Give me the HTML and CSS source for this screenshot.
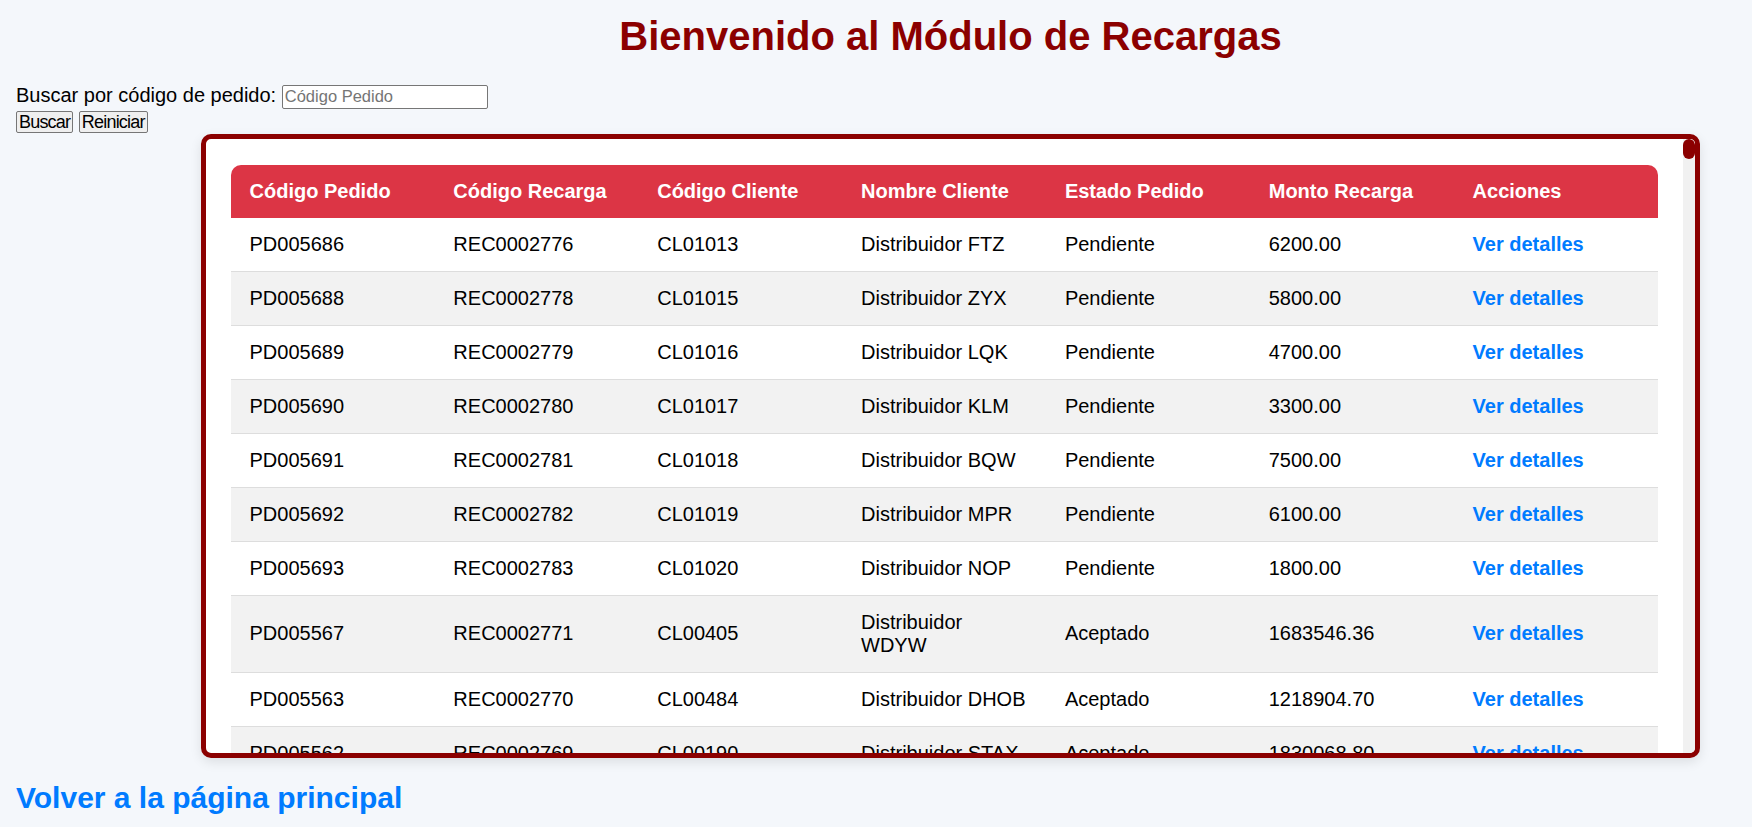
FILE: index.html
```html
<!DOCTYPE html>
<html lang="es">
<head>
<meta charset="utf-8">
<title>Módulo de Recargas</title>
<link rel="stylesheet" href="styles.css">
</head>
<body>
<h1 class="title">Bienvenido al Módulo de Recargas</h1>
<form class="search" onsubmit="return false;">
  <div class="search-row">
    <label class="search-label" for="codigo">Buscar por código de pedido:</label>
    <input class="search-input" id="codigo" type="text" placeholder="Código Pedido">
  </div>
  <div class="search-actions">
    <button class="btn" type="submit">Buscar</button>
    <button class="btn" type="button">Reiniciar</button>
  </div>
</form>
<div class="table-wrap">
  <div class="table-scroll">
    <table class="orders">
      <thead>
        <tr>
          <th>Código Pedido</th>
          <th>Código Recarga</th>
          <th>Código Cliente</th>
          <th>Nombre Cliente</th>
          <th>Estado Pedido</th>
          <th>Monto Recarga</th>
          <th>Acciones</th>
        </tr>
      </thead>
      <tbody>
        <tr><td>PD005686</td><td>REC0002776</td><td>CL01013</td><td>Distribuidor FTZ</td><td>Pendiente</td><td>6200.00</td><td><a class="details" href="#">Ver detalles</a></td></tr>
        <tr><td>PD005688</td><td>REC0002778</td><td>CL01015</td><td>Distribuidor ZYX</td><td>Pendiente</td><td>5800.00</td><td><a class="details" href="#">Ver detalles</a></td></tr>
        <tr><td>PD005689</td><td>REC0002779</td><td>CL01016</td><td>Distribuidor LQK</td><td>Pendiente</td><td>4700.00</td><td><a class="details" href="#">Ver detalles</a></td></tr>
        <tr><td>PD005690</td><td>REC0002780</td><td>CL01017</td><td>Distribuidor KLM</td><td>Pendiente</td><td>3300.00</td><td><a class="details" href="#">Ver detalles</a></td></tr>
        <tr><td>PD005691</td><td>REC0002781</td><td>CL01018</td><td>Distribuidor BQW</td><td>Pendiente</td><td>7500.00</td><td><a class="details" href="#">Ver detalles</a></td></tr>
        <tr><td>PD005692</td><td>REC0002782</td><td>CL01019</td><td>Distribuidor MPR</td><td>Pendiente</td><td>6100.00</td><td><a class="details" href="#">Ver detalles</a></td></tr>
        <tr><td>PD005693</td><td>REC0002783</td><td>CL01020</td><td>Distribuidor NOP</td><td>Pendiente</td><td>1800.00</td><td><a class="details" href="#">Ver detalles</a></td></tr>
        <tr><td>PD005567</td><td>REC0002771</td><td>CL00405</td><td>Distribuidor WDYW</td><td>Aceptado</td><td>1683546.36</td><td><a class="details" href="#">Ver detalles</a></td></tr>
        <tr><td>PD005563</td><td>REC0002770</td><td>CL00484</td><td>Distribuidor DHOB</td><td>Aceptado</td><td>1218904.70</td><td><a class="details" href="#">Ver detalles</a></td></tr>
        <tr><td>PD005562</td><td>REC0002769</td><td>CL00190</td><td>Distribuidor STAX</td><td>Aceptado</td><td>1830068.80</td><td><a class="details" href="#">Ver detalles</a></td></tr>
      </tbody>
    </table>
  </div>
  <div class="scrollbar" aria-hidden="true"><div class="scrollbar-thumb"></div></div>
</div>
<div class="back">
  <a class="back-link" href="#">Volver a la página principal</a>
</div>
</body>
</html>
```

FILE: styles.css
```css
html, body {
  margin: 0;
  padding: 0;
}

body {
  background: #f4f7fb;
  font-family: "Liberation Sans", Arial, sans-serif;
  font-size: 20px;
  color: #000;
}

.title {
  margin: 12.5px 52px 25.5px 201px;
  font-size: 40px;
  line-height: 46px;
  font-weight: bold;
  color: #8b0000;
  text-align: center;
}

.search {
  margin: 0 0 0 16px;
}

.search-row {
  display: flex;
  align-items: baseline;
  gap: 5.6px;
}

.search-label {
  font-size: 20px;
  line-height: 23px;
}

.search-input {
  box-sizing: border-box;
  width: 206px;
  height: 23.5px;
  margin: 1px 0 0 0;
  padding: 1px 2px;
  border: 1px solid #767676;
  border-radius: 2px;
  background: #fff;
  font-family: "Liberation Sans", Arial, sans-serif;
  font-size: 16.5px;
  color: #000;
}

.search-input::placeholder {
  color: #757575;
}

.search-actions {
  display: flex;
  gap: 5.6px;
  margin-top: 2.2px;
}

.btn {
  box-sizing: border-box;
  height: 22.6px;
  padding: 0 2px;
  border: 1px solid #767676;
  border-radius: 2px;
  background: #efefef;
  font-family: "Liberation Sans", Arial, sans-serif;
  font-size: 18px;
  letter-spacing: -0.8px;
  line-height: 1;
  color: #000;
}

.table-wrap {
  display: flex;
  box-sizing: border-box;
  height: 624px;
  margin: 1.2px 52px 0 201px;
  border: 5px solid #8b0000;
  border-radius: 10px;
  background: #fff;
  overflow: hidden;
  box-shadow: 0 4px 12px rgba(0, 0, 0, 0.1);
}

.table-scroll {
  flex: 1 1 auto;
  min-width: 0;
  padding: 25.5px 25px 0 25px;
  overflow: hidden;
}

.scrollbar {
  flex: 0 0 12px;
  background: #f1f1f1;
}

.scrollbar-thumb {
  height: 20px;
  border-radius: 6px;
  background: #8b0000;
}

.orders {
  width: 100%;
  table-layout: fixed;
  border-collapse: separate;
  border-spacing: 0;
}

.orders th,
.orders td {
  padding: 15px 18.5px;
  text-align: left;
  line-height: 23px;
  font-size: 20px;
}

.orders th {
  background: #dc3545;
  color: #fff;
  font-weight: bold;
}

.orders th:first-child {
  border-top-left-radius: 10px;
}

.orders th:last-child {
  border-top-right-radius: 10px;
}

.orders td {
  border-bottom: 1px solid #ddd;
}

.orders tbody tr:nth-child(even) td {
  background: #f2f2f2;
}

.details {
  color: #007bff;
  font-weight: bold;
  text-decoration: none;
}

.back {
  margin: 22.5px 0 0 16px;
}

.back-link {
  font-size: 30px;
  line-height: 34.5px;
  font-weight: bold;
  color: #007bff;
  text-decoration: none;
}
```
